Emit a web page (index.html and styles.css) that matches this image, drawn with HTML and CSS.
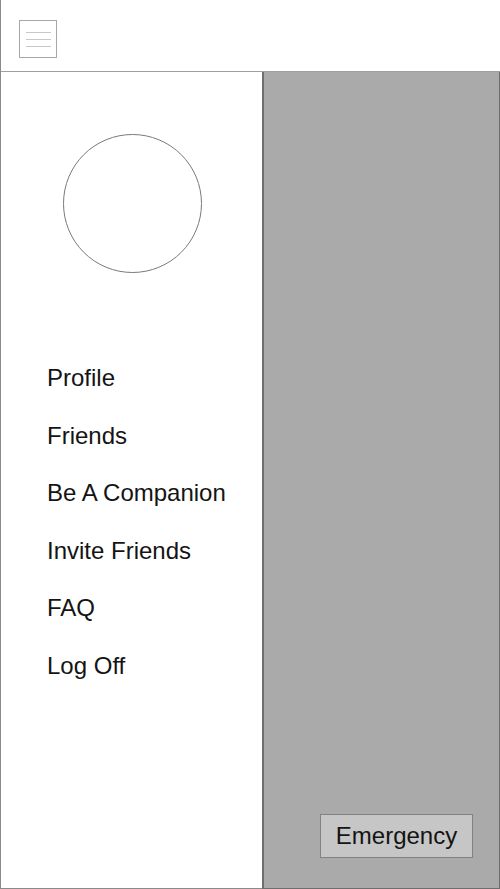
FILE: index.html
```html
<!DOCTYPE html>
<html lang="en">
<head>
<meta charset="utf-8">
<title>Menu</title>
<link rel="stylesheet" href="styles.css">
</head>
<body>
<div class="app">
  <header class="topbar">
    <button class="hamburger" aria-label="Menu">
      <span class="bar"></span>
      <span class="bar"></span>
      <span class="bar"></span>
    </button>
  </header>
  <main class="content">
    <nav class="sidebar">
      <div class="avatar"></div>
      <ul class="menu">
        <li class="menu-item">Profile</li>
        <li class="menu-item">Friends</li>
        <li class="menu-item">Be A Companion</li>
        <li class="menu-item">Invite Friends</li>
        <li class="menu-item">FAQ</li>
        <li class="menu-item">Log Off</li>
      </ul>
    </nav>
    <section class="panel">
      <button class="emergency">Emergency</button>
    </section>
  </main>
</div>
</body>
</html>
```
FILE: styles.css
```css
html, body {
  margin: 0;
  padding: 0;
  background: #ffffff;
}
* { box-sizing: border-box; }

.app {
  width: 500px;
  height: 889px;
  display: flex;
  flex-direction: column;
  border-left: 1px solid #8a8a8a;
  font-family: "Liberation Sans", Arial, sans-serif;
  color: #141414;
}

.topbar {
  height: 72px;
  flex: none;
  border-bottom: 1px solid #a0a0a0;
  padding: 20px 0 0 18px;
}

.hamburger {
  width: 38px;
  height: 38px;
  border: 1px solid #a6a6a6;
  background: #ffffff;
  padding: 0;
  display: flex;
  flex-direction: column;
  align-items: center;
  justify-content: center;
  gap: 6px;
}
.hamburger .bar {
  display: block;
  width: 25px;
  height: 1px;
  background: #999999;
  border-top: 1px solid #c8c8c8;
}

.content {
  flex: 1;
  display: flex;
}

.sidebar {
  width: 261px;
  flex: none;
  border-bottom: 1px solid #8a8a8a;
  padding-top: 62px;
  display: flex;
  flex-direction: column;
}

.avatar {
  width: 139px;
  height: 139px;
  border-radius: 50%;
  border: 1px solid #7a7a7a;
  align-self: center;
  margin-left: 2px;
}

.menu {
  list-style: none;
  margin: 76px 0 0 0;
  padding: 0 0 0 46px;
}
.menu-item {
  font-size: 24px;
  height: 57.5px;
  line-height: 57.5px;
  white-space: nowrap;
}

.panel {
  flex: 1;
  background: #aaaaaa;
  border-left: 2px solid #6e6e6e;
  border-right: 1px solid #6e6e6e;
  border-bottom: 1px solid #6e6e6e;
  display: flex;
  flex-direction: column;
  justify-content: flex-end;
  align-items: flex-end;
  padding: 0 26px 30px 0;
}

.emergency {
  width: 153px;
  height: 44px;
  background: #c6c6c6;
  border: 1px solid #828282;
  font-family: "Liberation Sans", Arial, sans-serif;
  font-size: 24px;
  color: #141414;
  padding: 0;
}
```
